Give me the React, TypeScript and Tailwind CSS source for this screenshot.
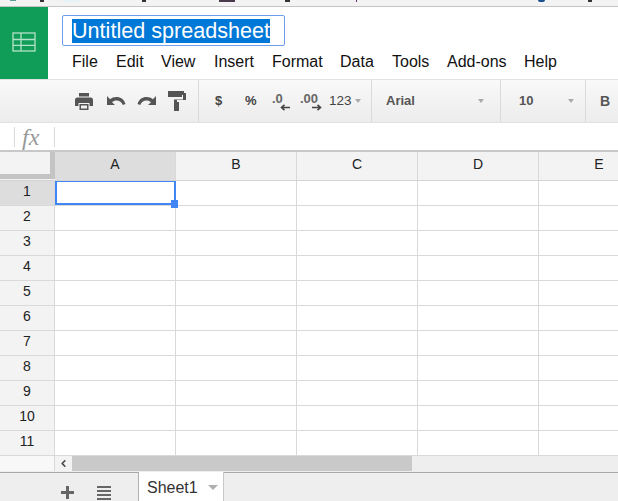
import { ChevronLeft } from "lucide-react";

const COLS = ["A", "B", "C", "D", "E"];
const ROWS = [1, 2, 3, 4, 5, 6, 7, 8, 9, 10, 11];
const MENUS = [
  { label: "File", w: "w-[44px]" },
  { label: "Edit", w: "w-[45px]" },
  { label: "View", w: "w-[53px]" },
  { label: "Insert", w: "w-[58px]" },
  { label: "Format", w: "w-[68px]" },
  { label: "Data", w: "w-[52px]" },
  { label: "Tools", w: "w-[55px]" },
  { label: "Add-ons", w: "w-[77px]" },
  { label: "Help", w: "w-[50px]" },
];

function Caret({ className = "" }: { className?: string }) {
  return <span className={`h-0 w-0 border-x-[3px] border-t-[4px] border-x-transparent border-t-[#aaaaaa] ${className}`} />;
}

function Sep() {
  return <span className="h-[42px] w-px shrink-0 bg-[#dadada]" />;
}

function SheetIcon() {
  return (
    <svg width="24" height="20" viewBox="0 0 24 20" fill="none" stroke="#b4e2c8" strokeWidth="1.3">
      <rect x="1" y="1" width="22" height="18" />
      <path d="M1 7.500h22M1 13.300h22M9 1v18" />
    </svg>
  );
}

function PrintIcon() {
  return (
    <svg width="18" height="17" viewBox="0 0 18 17" fill="#555555">
      <path d="M4 0h10v3.500H4z" />
      <path d="M2.500 4.500h13A2.500 2.500 0 0 1 18 7v6h-3.500v-3h-11v3H0V7a2.500 2.500 0 0 1 2.500-2.500z" />
      <path d="M4.500 11h9v6h-9zM6 12.500v3h6v-3z" fillRule="evenodd" />
    </svg>
  );
}

function UndoIcon({ flip }: { flip?: boolean }) {
  return (
    <svg width="19" height="11" viewBox="0 0 19 11" fill="#555555" className={flip ? "-scale-x-100" : ""}>
      <path d="M0 0v9h8L5 6.200C6.300 5 7.800 4.400 9.500 4.400c3 0 5.400 1.900 6.300 4.600l2.700-.9C17.200 3.500 13.700 1 9.500 1 7 1 4.800 1.900 3.100 3.300z" />
    </svg>
  );
}

function RollerIcon() {
  return (
    <svg width="18" height="20" viewBox="0 0 18 20" fill="#555555">
      <path d="M0 0h16v2h2v7H9v2h2v9H6V8.500h9V4h-1v2H0z" />
    </svg>
  );
}

function DecimalIcon({ text, right }: { text: string; right?: boolean }) {
  return (
    <span className="relative block h-[24px] w-[28px] shrink-0 text-[13px] font-bold leading-[20px] text-[#666666]">
      <span className="absolute left-0 top-0">{text}</span>
      <svg
        width="10"
        height="7"
        viewBox="0 0 10 7"
        fill="none"
        stroke="#444444"
        strokeWidth="1.6"
        className={`absolute bottom-[2px] ${right ? "right-[6px]" : "right-[10px] -scale-x-100"}`}
      >
        <path d="M0 3.500h8M5.500 .8l3 2.700-3 2.700" />
      </svg>
    </span>
  );
}

export default function App() {
  return (
    <div className="flex h-[501px] w-[618px] flex-col overflow-hidden bg-white font-['Liberation_Sans',sans-serif] text-[#222222]">
      {/* clipped browser bookmarks bar */}
      <div className="relative h-[7px] shrink-0 overflow-hidden border-b border-[#c4c4c4] bg-[#f3f3f3]">
        <span className="absolute left-[10px] top-0 h-[1px] w-[6px] bg-[#5f9f96]" />
        <span className="absolute left-[40px] top-0 h-[2px] w-[4px] bg-[#333333]" />
        <span className="absolute left-[63px] top-0 h-[2px] w-[16px] bg-[#e4f3f8]" />
        <span className="absolute left-[142px] top-0 h-[2px] w-[4px] bg-[#333333]" />
        <span className="absolute left-[219px] top-0 h-[2px] w-[16px] bg-[#4a3a4e]" />
        <span className="absolute left-[285px] top-0 h-[2px] w-[5px] bg-[#333333]" />
        <span className="absolute left-[356px] top-0 h-[2px] w-[1px] bg-[#5b2a7a]" />
        <span className="absolute left-[538px] top-0 h-[2px] w-[7px] rounded-b-full bg-[#1a4f8f]" />
        <span className="absolute left-[588px] top-0 h-[2px] w-[4px] bg-[#333333]" />
      </div>

      <div className="flex h-[73px] shrink-0 border-b border-[#e2e2e2]">
        <div className="flex w-[48px] shrink-0 items-center justify-center bg-[#0f9d58] pb-[2px]">
          <SheetIcon />
        </div>
        <div className="flex-1 pl-[14px] pt-[8px]">
          <div className="flex h-[31px] w-[223px] items-center rounded-[2px] border border-[#6d9eeb] pl-[9px]">
            <span className="bg-[#0078d7] text-[21.6px] leading-[24px] text-white">Untitled spreadsheet</span>
          </div>
          <div className="mt-[6px] flex pl-[10px] text-[16px] leading-[20px] text-[#111111]">
            {MENUS.map((m) => (
              <span key={m.label} className={`${m.w} shrink-0`}>
                {m.label}
              </span>
            ))}
          </div>
        </div>
      </div>

      <div className="flex h-[43px] shrink-0 items-center border-b border-[#e2e2e2] bg-gradient-to-b from-[#f9f9f9] to-[#ececec]">
        <div className="flex w-[198px] shrink-0 items-center pl-[75px]">
          <PrintIcon />
          <span className="ml-[14px]"><UndoIcon /></span>
          <span className="ml-[11px]"><UndoIcon flip /></span>
          <span className="ml-[12px]"><RollerIcon /></span>
        </div>
        <Sep />
        <div className="flex w-[172px] shrink-0 items-center text-[13px]">
          <span className="ml-[16px] w-[30px] font-bold text-[#444444]">$</span>
          <span className="w-[27px] font-bold text-[#444444]">%</span>
          <DecimalIcon text=".0" />
          <DecimalIcon text=".00" right />
          <span className="ml-[1px] w-[23px] text-[13.5px] text-[#444444]">123</span>
          <Caret className="ml-[3px]" />
        </div>
        <Sep />
        <div className="flex w-[128px] shrink-0 items-center pl-[14px] pr-[16px] text-[13px] font-bold text-[#555555]">
          <span className="flex-1">Arial</span>
          <Caret />
        </div>
        <Sep />
        <div className="flex w-[84px] shrink-0 items-center pl-[18px] pr-[11px] text-[13px] font-bold text-[#555555]">
          <span className="flex-1">10</span>
          <Caret />
        </div>
        <Sep />
        <span className="ml-[14px] text-[14px] font-bold text-[#555555]">B</span>
      </div>

      <div className="flex h-[29px] shrink-0 items-center border-b-2 border-[#c8c8c8]">
        <span className="ml-[14px] h-[20px] w-px bg-[#d9d9d9]" />
        <span className="w-[39px] pl-[7px] font-['Liberation_Serif',serif] text-[24px] italic leading-[24px] text-[#999999]">fx</span>
        <span className="h-[20px] w-px bg-[#d9d9d9]" />
      </div>

      <div className="flex h-[29px] shrink-0 border-b border-[#d4d4d4] bg-[#f3f3f3] text-[14px]">
        <div className="h-[27px] w-[55px] shrink-0 border-b-[5px] border-r-[5px] border-[#c4c4c4]" />
        {COLS.map((c) => (
          <div
            key={c}
            className={`flex w-[121px] shrink-0 items-center justify-center border-r border-[#d9d9d9] pb-[3px] ${c === "A" ? "bg-[#dddddd]" : ""}`}
          >
            {c}
          </div>
        ))}
      </div>

      <div className="h-[275px] shrink-0 overflow-hidden">
        {ROWS.map((r) => (
          <div key={r} className="flex h-[25px]">
            <div
              className={`flex w-[55px] shrink-0 items-center justify-center border-b border-r border-[#d9d9d9] pb-[4px] text-[14px] ${r === 1 ? "bg-[#dddddd]" : "bg-[#f3f3f3]"}`}
            >
              {r}
            </div>
            {COLS.map((c) => (
              <div key={c} className="relative w-[121px] shrink-0 border-b border-r border-[#d9d9d9]">
                {r === 1 && c === "A" && (
                  <>
                    <div className="absolute left-0 top-[-1px] z-10 h-[25px] w-[121px] border-2 border-[#4285f4]" />
                    <div className="absolute left-[116px] top-[19px] z-10 h-[8px] w-[7px] bg-[#4285f4]" />
                  </>
                )}
              </div>
            ))}
          </div>
        ))}
      </div>

      <div className="flex h-[17px] shrink-0 border-b border-[#a8a8a8] bg-[#eeeeee] pb-px">
        <div className="w-[55px] shrink-0 border-r border-[#d9d9d9] bg-[#f8f8f8]" />
        <div className="flex w-[17px] shrink-0 items-center justify-center bg-[#f3f3f3]">
          <ChevronLeft size={11} strokeWidth={3.5} color="#444444" />
        </div>
        <div className="w-[340px] shrink-0 bg-[#c9c9c9]" />
      </div>

      <div className="flex h-[28px] shrink-0 bg-[#eeeeee]">
        <div className="flex w-[139px] shrink-0 items-center border-r border-[#b0b0b0] pl-[61px] pt-[11px]">
          <svg width="13" height="13" viewBox="0 0 13 13" fill="#666666">
            <path d="M5 0h3v5h5v3H8v5H5V8H0V5h5z" />
          </svg>
          <svg width="14" height="14" viewBox="0 0 14 14" fill="#666666" className="ml-[23px]">
            <path d="M0 0h14v2H0zM0 4h14v2H0zM0 8h14v2H0zM0 12h14v2H0z" />
          </svg>
        </div>
        <div className="relative -mt-px flex w-[85px] shrink-0 items-center border-r border-[#c8c8c8] bg-white pl-[8px] pt-[2px] text-[16px] text-[#333333]">
          Sheet1
          <span className="ml-[10px] h-0 w-0 border-x-[5px] border-t-[5px] border-x-transparent border-t-[#b0b0b0]" />
        </div>
      </div>
    </div>
  );
}
